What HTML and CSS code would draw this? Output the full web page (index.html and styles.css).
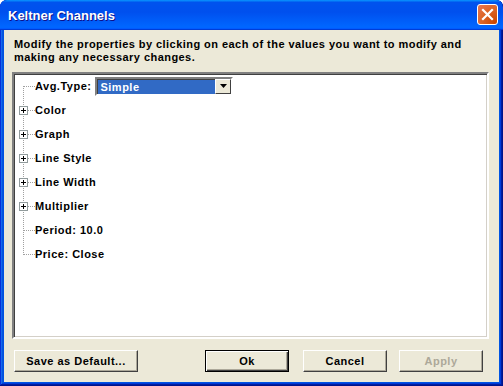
FILE: index.html
```html
<!DOCTYPE html>
<html>
<head>
<meta charset="utf-8">
<link rel="stylesheet" href="styles.css">
</head>
<body>
<div class="window">
  <div class="titlebar">
    <span class="title">Keltner Channels</span>
    <span class="close"><svg width="13" height="13" viewBox="0 0 13 13"><path d="M2 2 L11 11 M11 2 L2 11" stroke="#fff" stroke-width="2.2" stroke-linecap="square"/></svg></span>
  </div>
  <div class="client">
    <p class="desc">Modify the properties by clicking on each of the values you want to modify and making any necessary changes.</p>
    <div class="tree">
      <div class="vline"></div>
      <div class="row"><span class="hl"></span><span class="lbl">Avg.Type:</span>
        <span class="combo"><span class="sel">Simple</span><span class="drop"><svg width="7" height="4" viewBox="0 0 7 4"><path d="M0 0 H7 L3.5 4 Z" fill="#000"/></svg></span></span>
      </div>
      <div class="row"><span class="hl"></span><span class="plus"></span><span class="lbl">Color</span></div>
      <div class="row"><span class="hl"></span><span class="plus"></span><span class="lbl">Graph</span></div>
      <div class="row"><span class="hl"></span><span class="plus"></span><span class="lbl">Line Style</span></div>
      <div class="row"><span class="hl"></span><span class="plus"></span><span class="lbl">Line Width</span></div>
      <div class="row"><span class="hl"></span><span class="plus"></span><span class="lbl">Multiplier</span></div>
      <div class="row"><span class="hl"></span><span class="lbl">Period: 10.0</span></div>
      <div class="row"><span class="hl"></span><span class="lbl">Price: Close</span></div>
    </div>
    <div class="buttons">
      <button class="btn save">Save as Default...</button>
      <span class="spacer"></span>
      <button class="btn ok">Ok</button>
      <button class="btn cancel">Cancel</button>
      <button class="btn apply" disabled>Apply</button>
    </div>
  </div>
</div>
</body>
</html>
```
FILE: styles.css
```css
* { box-sizing: border-box; }
html, body { margin: 0; padding: 0; }
body { width: 503px; height: 386px; overflow: hidden; background: #fff;
  font-family: "Liberation Sans", Arial, sans-serif; }
.window {
  width: 503px; height: 386px;
  display: flex; flex-direction: column;
  background: #0054e3;
  border-radius: 7px 7px 0 0;
  padding: 0 4px 4px 4px;
  box-shadow: inset -1px -1px #00138c, inset 1px 1px #0831d9, inset -2px -2px #001ea0, inset 2px 2px #166aee, inset -3px -3px #003bda, inset 3px 3px #0855dd;
  overflow: hidden;
}
.titlebar {
  height: 30px; margin: 0 -4px;
  display: flex; align-items: center; justify-content: space-between;
  padding: 0 5px 0 8px;
  border-radius: 7px 7px 0 0;
  background: linear-gradient(180deg, #0997ff 0%, #0053ee 8%, #0050ee 40%, #0066ff 88%, #0066ff 93%, #005bff 95%, #003dd7 96%, #003dd7 100%);
}
.title { color: #fff; font-weight: bold; font-size: 13px; letter-spacing: 0;
  text-shadow: 1px 1px #0f1089; }
.close {
  width: 21px; height: 21px; border: 1px solid #fff; border-radius: 3px;
  background: radial-gradient(circle at 90% 90%, #cc4600 0%, #dc6527 55%, #e87654 100%);
  display: flex; align-items: center; justify-content: center;
  margin-top: -1px;
}
.client { flex: 1; background: #ece9d8; display: flex; flex-direction: column; padding: 0 10px 0 8px; }
.desc { margin: 8px 0 0 2px; font-size: 11px; font-weight: bold; line-height: 13px; color: #000; letter-spacing: 0.45px; height: 34px; }
.tree {
  position: relative;
  height: 267px; background: #fff;
  border: 2px solid; border-color: #808080 #fff #fff #808080;
  box-shadow: inset 1px 1px #404040, inset -1px -1px #d4d0c8;
}
.vline { position: absolute; left: 9px; top: 12px; height: 169px; border-left: 1px dotted #a0a0a0; }
.row { height: 24px; display: flex; align-items: center; position: relative; padding-left: 21px; font-size: 11px; font-weight: bold; color: #000; }
.hl { position: absolute; left: 10px; top: 12px; width: 11px; border-top: 1px dotted #a0a0a0; }
.plus { position: absolute; left: 5px; top: 8px; width: 9px; height: 9px; border: 1px solid #919b9c; background: #fff; }
.plus::before { content: ""; position: absolute; left: 1px; top: 3px; width: 5px; height: 1px; background: #000; }
.plus::after { content: ""; position: absolute; left: 3px; top: 1px; width: 1px; height: 5px; background: #000; }
.lbl { letter-spacing: 0.5px; }
.combo {
  margin-left: 4px; width: 138px; height: 19px; display: flex;
  border: 2px solid; border-color: #808080 #fff #fff #808080;
  box-shadow: inset 1px 1px #404040;
  background: #fff;
}
.sel { flex: 1; background: #316ac5; color: #fff; padding-left: 2px; line-height: 15px; margin: 1px 0 0 1px; letter-spacing: 0.5px; }
.drop { width: 16px; background: #ece9d8; display: flex; align-items: center; justify-content: center;
  border: 1px solid; border-color: #fff #404040 #404040 #fff; }
.buttons { display: flex; align-items: center; margin-top: 11px; margin-right: 6px; }
.btn {
  height: 22px; font-family: inherit; font-size: 11px; font-weight: bold; color: #000;
  background: #ece9d8; border: 1px solid; border-color: #fff #404040 #404040 #fff;
  box-shadow: inset -1px -1px #aca899; padding: 0; letter-spacing: 0.5px;
}
.save { width: 124px; margin-left: 2px; }
.spacer { flex: 1; }
.ok { width: 84px; border: 1px solid #000; box-shadow: inset 1px 1px #fff, inset -1px -1px #404040, inset -2px -2px #aca899; }
.cancel { width: 84px; margin-left: 14px; }
.apply { width: 84px; margin-left: 12px; color: #aca899; }
```
